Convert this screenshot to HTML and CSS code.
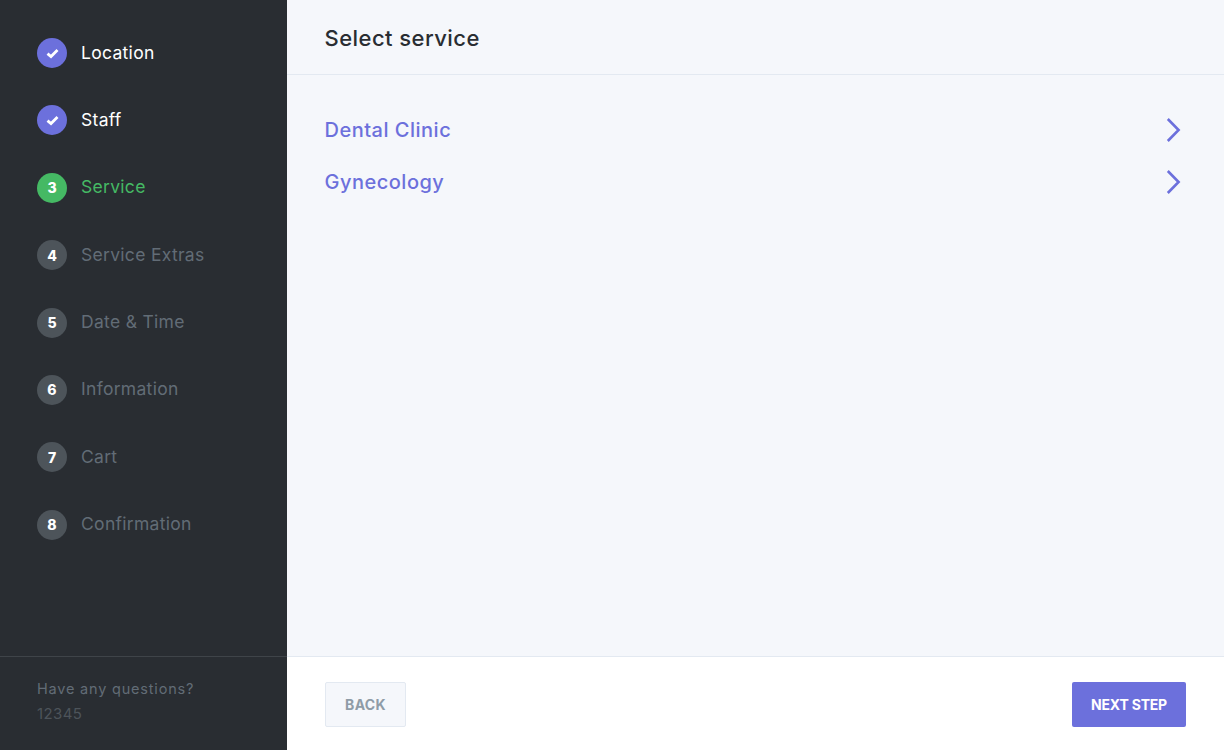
FILE: index.html
```html
<!DOCTYPE html>
<html lang="en">

<head>
    <meta charset="UTF-8">
    <meta name="viewport" content="width=device-width, initial-scale=1.0">
    <title>Booking</title>
    <link rel="stylesheet" href="styles.css">
</head>

<body>
    <div class="panel">
        <!-- Steps -->
        <aside class="sidebar">
            <ul class="steps">
                <li class="step done">
                    <span class="step-num">
                        <svg width="13" height="11" viewBox="0 0 13 11"><path d="M1.5 5.6 5 8.6 11.5 2" fill="none" stroke="#fff" stroke-width="2.8"/></svg>
                    </span>
                    <span class="step-name">Location</span>
                </li>
                <li class="step done">
                    <span class="step-num">
                        <svg width="13" height="11" viewBox="0 0 13 11"><path d="M1.5 5.6 5 8.6 11.5 2" fill="none" stroke="#fff" stroke-width="2.8"/></svg>
                    </span>
                    <span class="step-name">Staff</span>
                </li>
                <li class="step active"><span class="step-num">3</span><span class="step-name">Service</span></li>
                <li class="step"><span class="step-num">4</span><span class="step-name">Service Extras</span></li>
                <li class="step"><span class="step-num">5</span><span class="step-name">Date &amp; Time</span></li>
                <li class="step"><span class="step-num">6</span><span class="step-name">Information</span></li>
                <li class="step"><span class="step-num">7</span><span class="step-name">Cart</span></li>
                <li class="step"><span class="step-num">8</span><span class="step-name">Confirmation</span></li>
            </ul>
            <div class="contact">
                <div class="contact-title">Have any questions?</div>
                <div class="contact-phone">12345</div>
            </div>
        </aside>

        <!-- Main -->
        <main class="content">
            <header class="content-header">
                <h1>Select service</h1>
            </header>
            <div class="categories">
                <a class="category" href="#">
                    Dental Clinic
                    <svg width="20" height="26" viewBox="0 0 20 26"><path d="M1.8 2 12.6 13 1.8 24" fill="none" stroke="#6c70dc" stroke-width="2.6"/></svg>
                </a>
                <a class="category" href="#">
                    Gynecology
                    <svg width="20" height="26" viewBox="0 0 20 26"><path d="M1.8 2 12.6 13 1.8 24" fill="none" stroke="#6c70dc" stroke-width="2.6"/></svg>
                </a>
            </div>
            <footer class="content-footer">
                <button class="btn btn-back">BACK</button>
                <button class="btn btn-next">NEXT STEP</button>
            </footer>
        </main>
    </div>
</body>

</html>
```

FILE: styles.css
```css
/* General */
html,
body {
    margin: 0;
    padding: 0;
    height: 100%;
}

body {
    font-family: Inter, "Open Sans", sans-serif;
    background-color: #fff;
}

.panel {
    display: flex;
    width: 1224px;
    height: 750px;
    overflow: hidden;
}

/* Sidebar */
.sidebar {
    display: flex;
    flex-direction: column;
    justify-content: space-between;
    flex: 0 0 287px;
    background-color: #292d32;
}

.steps {
    list-style: none;
    margin: 0;
    padding: 38px 0 0 37px;
    display: flex;
    flex-direction: column;
    gap: 37.4px;
}

.step {
    display: flex;
    align-items: center;
    gap: 14px;
    height: 30px;
    font-size: 17.5px;
    letter-spacing: 0.3px;
    color: #626c76;
}

.step-name {
    margin-top: -2px;
}

.step-num {
    display: flex;
    align-items: center;
    justify-content: center;
    width: 30px;
    height: 30px;
    border-radius: 50%;
    background-color: #4d545a;
    color: #fff;
    font-size: 14px;
    font-weight: 800;
    letter-spacing: 0;
}

.step.done {
    color: #fff;
}

.step.done .step-num {
    background-color: #6c70dc;
}

.step.active {
    color: #45b964;
}

.step.active .step-num {
    background-color: #45b964;
}

.contact {
    height: 94px;
    box-sizing: border-box;
    padding: 22px 0 0 37px;
    border-top: 1px solid #3f4449;
}

.contact-title {
    font-size: 14.5px;
    letter-spacing: 0.8px;
    line-height: 20px;
    color: #626c76;
}

.contact-phone {
    margin-top: 5px;
    font-size: 15px;
    letter-spacing: 0.4px;
    line-height: 20px;
    color: #4d545a;
}

/* Main content */
.content {
    flex: 1;
    display: flex;
    flex-direction: column;
    background-color: #f5f7fb;
}

.content-header {
    height: 75px;
    box-sizing: border-box;
    padding: 2px 0 0 37.5px;
    display: flex;
    align-items: center;
    border-bottom: 1px solid #e3e9f1;
}

.content-header h1 {
    margin: 0;
    font-size: 22px;
    letter-spacing: 0.45px;
    font-weight: 500;
    color: #292d32;
}

.categories {
    flex: 1;
    padding: 41.5px 38px 0 37.5px;
    display: flex;
    flex-direction: column;
    gap: 26.4px;
}

.category {
    display: flex;
    justify-content: space-between;
    align-items: center;
    height: 26px;
    font-size: 20px;
    letter-spacing: 0.5px;
    font-weight: 500;
    color: #6c70dc;
    text-decoration: none;
}

.content-footer {
    height: 94px;
    box-sizing: border-box;
    padding: 25px 38px 0;
    display: flex;
    justify-content: space-between;
    align-items: flex-start;
    background-color: #fff;
    border-top: 1px solid #e3e9f1;
}

/* Buttons */
.btn {
    height: 45px;
    border-radius: 2px;
    font-family: Inter, sans-serif;
    font-size: 14px;
    font-weight: 700;
    cursor: pointer;
}

.btn-back {
    width: 81px;
    background-color: #f5f7fb;
    border: 1px solid #e3e9f1;
    color: #8f9ca7;
    letter-spacing: 0.3px;
}

.btn-next {
    width: 114px;
    background-color: #6c70dc;
    border: none;
    color: #fff;
    letter-spacing: -0.2px;
}
```
